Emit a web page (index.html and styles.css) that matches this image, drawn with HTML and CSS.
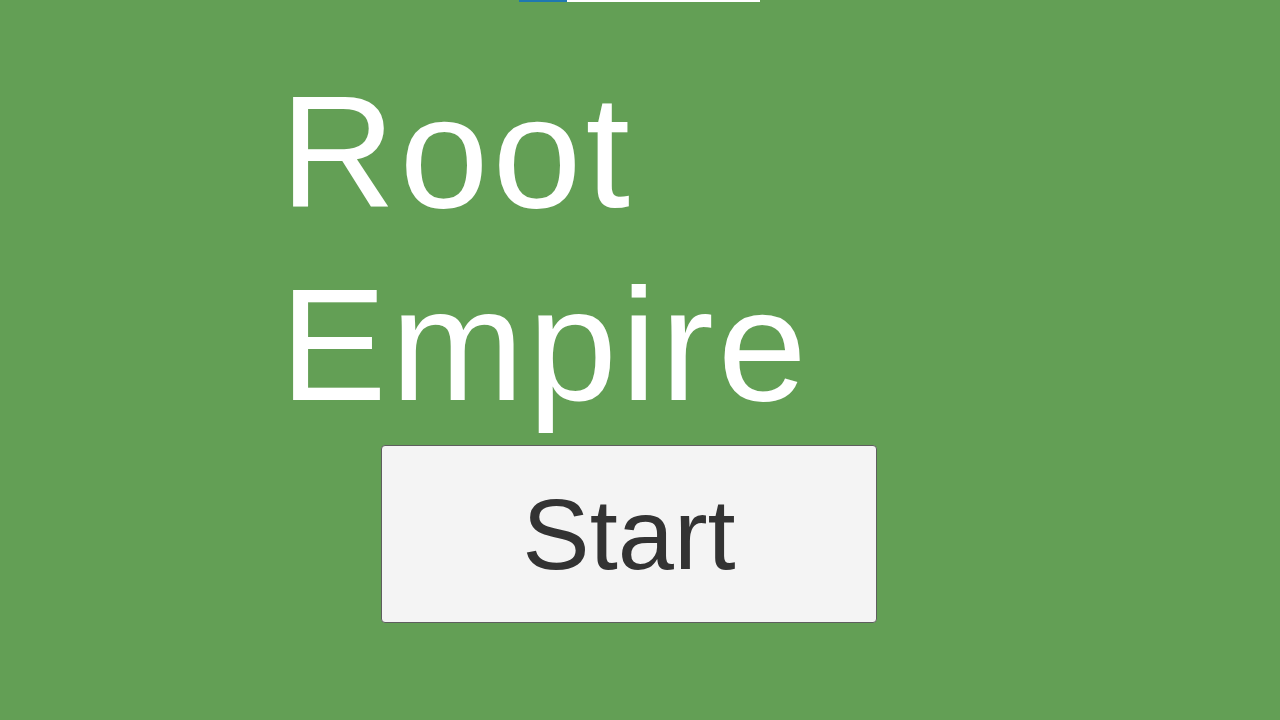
FILE: index.html
```html
<!DOCTYPE html>
<html lang="en">
<head>
<meta charset="utf-8">
<title>Root Empire</title>
<link rel="stylesheet" href="styles.css">
</head>
<body>
<div class="loader"><div class="loader-fill" style="width: 48px"></div></div>
<main class="menu">
  <h1 class="title">Root<br>Empire</h1>
  <button class="start-btn" type="button">Start</button>
</main>
</body>
</html>
```

FILE: styles.css
```css
html, body {
  margin: 0;
  padding: 0;
  height: 100%;
}
body {
  background: #639f55;
  font-family: "Liberation Sans", Arial, sans-serif;
  overflow: hidden;
}
.loader {
  margin-left: 519px;
  width: 241px;
  height: 2px;
  background: #ffffff;
  display: flex;
}
.loader-fill {
  height: 100%;
  background: #1f78b0;
}
.menu {
  display: flex;
  flex-direction: column;
  align-items: flex-start;
  padding-left: 280px;
}
.title {
  margin: 53px 0 0 0;
  font-size: 160px;
  line-height: 193px;
  letter-spacing: 4px;
  font-weight: normal;
  color: #ffffff;
}
.start-btn {
  margin: 4px 0 0 101px;
  width: 496px;
  height: 178px;
  background: #f4f4f4;
  border: 1px solid #5e5e5e;
  border-radius: 4px;
  color: #333333;
  font-family: "Liberation Sans", Arial, sans-serif;
  font-size: 101px;
  padding: 0;
  display: flex;
  align-items: center;
  justify-content: center;
}
```
